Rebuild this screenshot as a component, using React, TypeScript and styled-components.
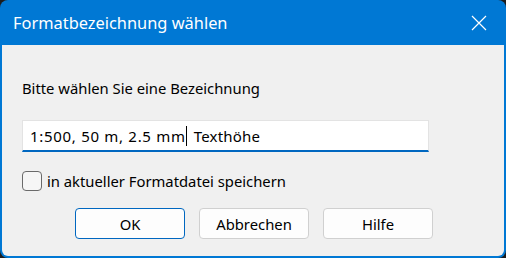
import styled, { createGlobalStyle } from 'styled-components';

const GlobalStyle = createGlobalStyle`
  html, body {
    margin: 0;
    padding: 0;
    background: #1c1c1c;
  }
  body {
    font-family: 'Noto Sans', 'Open Sans', sans-serif;
  }
`;

const Window = styled.div`
  width: 506px;
  height: 258px;
  box-sizing: border-box;
  display: flex;
  flex-direction: column;
  background: #0078d4;
  border-radius: 8px;
  padding: 0 2px 2px 2px;
  overflow: hidden;
`;

const TitleBar = styled.div`
  height: 45px;
  flex: none;
  display: flex;
  align-items: center;
  justify-content: space-between;
  padding: 0 17px 0 11px;
  color: #ffffff;
  font-size: 16.4px;
`;

const CloseIcon = styled.svg`
  width: 16px;
  height: 16px;
  display: block;
`;

const Content = styled.div`
  flex: 1;
  background: #f0f0f0;
  border-radius: 0 0 6px 6px;
  display: flex;
  flex-direction: column;
  padding: 33px 0 0 20px;
  font-size: 14.8px;
  color: #000;
`;

const Label = styled.div`
  line-height: 20px;
  height: 20px;
`;

const Field = styled.div`
  margin-top: 22px;
  width: 407px;
  height: 32px;
  box-sizing: border-box;
  background: #ffffff;
  border: 1px solid #e3e3e3;
  border-bottom: 2px solid #0067c0;
  display: flex;
  align-items: center;
  padding-left: 7px;
  white-space: pre;
  font-size: 15px;
`;

const FieldText = styled.span<{ $spaced?: boolean }>`
  letter-spacing: ${(p) => (p.$spaced ? '0.7px' : '0.2px')};
  padding-left: ${(p) => (p.$spaced ? '0' : '7px')};
`;

const Caret = styled.span`
  display: inline-block;
  width: 1px;
  height: 20px;
  background: #000;
`;

const CheckRow = styled.label`
  margin-top: 19px;
  display: flex;
  align-items: center;
  gap: 5px;
  height: 20px;
`;

const Box = styled.span`
  width: 20px;
  height: 20px;
  box-sizing: border-box;
  border: 1px solid #6a6a6a;
  border-radius: 4px;
  background: #f6f6f6;
`;

const Buttons = styled.div`
  margin-top: 17px;
  margin-left: 53px;
  display: flex;
  gap: 14px;
`;

const Button = styled.button<{ $primary?: boolean }>`
  width: 110px;
  height: 31px;
  box-sizing: border-box;
  border-radius: 4px;
  border: 1px solid ${(p) => (p.$primary ? '#0067c0' : '#d0d0d0')};
  background: #fdfdfd;
  font-family: inherit;
  font-size: 14.8px;
  color: #000;
  padding: 0;
`;

export default function App() {
  return (
    <>
      <GlobalStyle />
      <Window>
        <TitleBar>
          <span>Formatbezeichnung wählen</span>
          <CloseIcon viewBox="0 0 16 16">
            <path d="M1 1 L15 15 M15 1 L1 15" stroke="#fff" strokeWidth="1.2" fill="none" />
          </CloseIcon>
        </TitleBar>
        <Content>
          <Label>Bitte wählen Sie eine Bezeichnung</Label>
          <Field>
            <FieldText $spaced>1:500, 50 m, 2.5 mm</FieldText>
            <Caret />
            <FieldText>Texthöhe</FieldText>
          </Field>
          <CheckRow>
            <Box />
            <span>in aktueller Formatdatei speichern</span>
          </CheckRow>
          <Buttons>
            <Button $primary>OK</Button>
            <Button>Abbrechen</Button>
            <Button>Hilfe</Button>
          </Buttons>
        </Content>
      </Window>
    </>
  );
}
